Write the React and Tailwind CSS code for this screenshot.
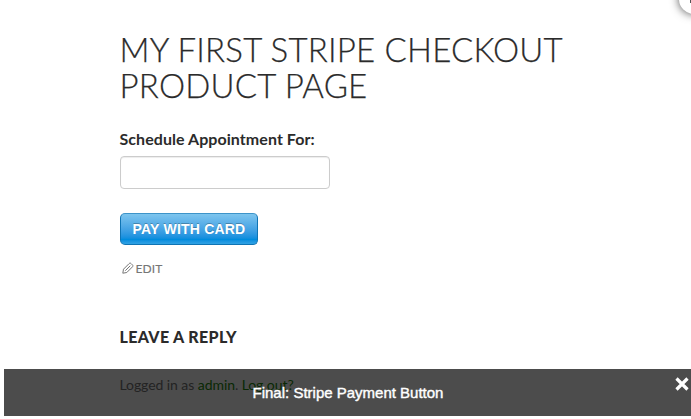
function PencilIcon() {
  return (
    <svg viewBox="0 0 12 12" className="h-3 w-3" fill="none" stroke="#767676" strokeWidth="1" strokeLinejoin="round">
      <path d="M.8 11.200l.7-4L7 1.700c.8-.8 1.400-.8 2.100-.1l1.300 1.300c.7.7.7 1.300-.1 2.100L4.800 10.500z" />
      <path d="M3.300 8.700l5-5" />
    </svg>
  );
}

function CloseIcon() {
  return (
    <svg viewBox="0 0 14 14" className="h-3.5 w-3.5" stroke="#fff" strokeWidth="3.200">
      <path d="M1.500 1.500l11 11M12.500 1.500l-11 11" />
    </svg>
  );
}

export default function App() {
  return (
    <div className="relative h-[419px] w-[691px] overflow-hidden bg-white font-['Lato','Liberation_Sans',sans-serif] text-[#2b2b2b]">
      <main className="flex flex-col items-start pt-[31px] pl-[120px] whitespace-nowrap">
        <h1 className="-ml-[0.5px] text-[33px] leading-9 font-light tracking-[0.2px] uppercase [-webkit-text-stroke:0.25px_#2b2b2b]">
          My First Stripe Checkout
          <br />
          Product Page
        </h1>
        <label htmlFor="appointment" className="mt-6 -ml-[0.5px] text-base leading-6 font-bold tracking-[0.06px]">
          Schedule Appointment For:
        </label>
        <input
          id="appointment"
          className="mt-[5px] h-[33px] w-[210px] rounded border border-[#ccc] bg-white px-2 shadow-[inset_0_1px_1px_rgba(0,0,0,0.075)]"
        />
        <button className="mt-6 flex h-8 w-[138px] items-center justify-center rounded-[5px] border border-[#0f74b4] border-t-[#3d94c9] bg-linear-to-b from-[#7dc5ee] via-[#008cdd] via-85% to-[#30a2e4] font-['Liberation_Sans',sans-serif] text-sm font-bold tracking-[0.2px] text-white uppercase [text-shadow:0_-1px_0_rgba(0,0,0,0.25)]">
          Pay with Card
        </button>
        <a className="mt-[15px] ml-[2px] flex h-4 items-center gap-[1.500px] text-xs tracking-[0.1px] text-[#767676] uppercase [-webkit-text-stroke:0.15px_#767676]">
          <PencilIcon />
          <span className="pt-px">Edit</span>
        </a>
        <h3 className="mt-[49px] -ml-[0.5px] text-base leading-6 font-black tracking-[0.35px] uppercase">Leave a Reply</h3>
        <p className="mt-6 -ml-[0.5px] text-sm leading-6 tracking-[-0.07px] text-[#767676]">
          Logged in as <a className="text-[#24890d]">admin</a>. <a className="text-[#24890d]">Log out?</a>
        </p>
      </main>
      <div className="absolute top-[369px] right-0 left-1 flex h-[47px] items-center justify-center bg-black/70 font-['Liberation_Sans',sans-serif]">
        <span className="pt-0.5 pl-px text-[15px] text-white [-webkit-text-stroke:0.4px_#fff]">Final: Stripe Payment Button</span>
        <button className="absolute top-2 right-0.5">
          <CloseIcon />
        </button>
      </div>
      <div className="absolute -top-4 left-[679px] h-[30px] w-[30px] rounded-full bg-white shadow-[0_0_10px_rgba(0,0,0,0.7)]">
        <span className="absolute top-4 left-[11px] h-[3px] w-1 bg-[#555]" />
      </div>
    </div>
  );
}
